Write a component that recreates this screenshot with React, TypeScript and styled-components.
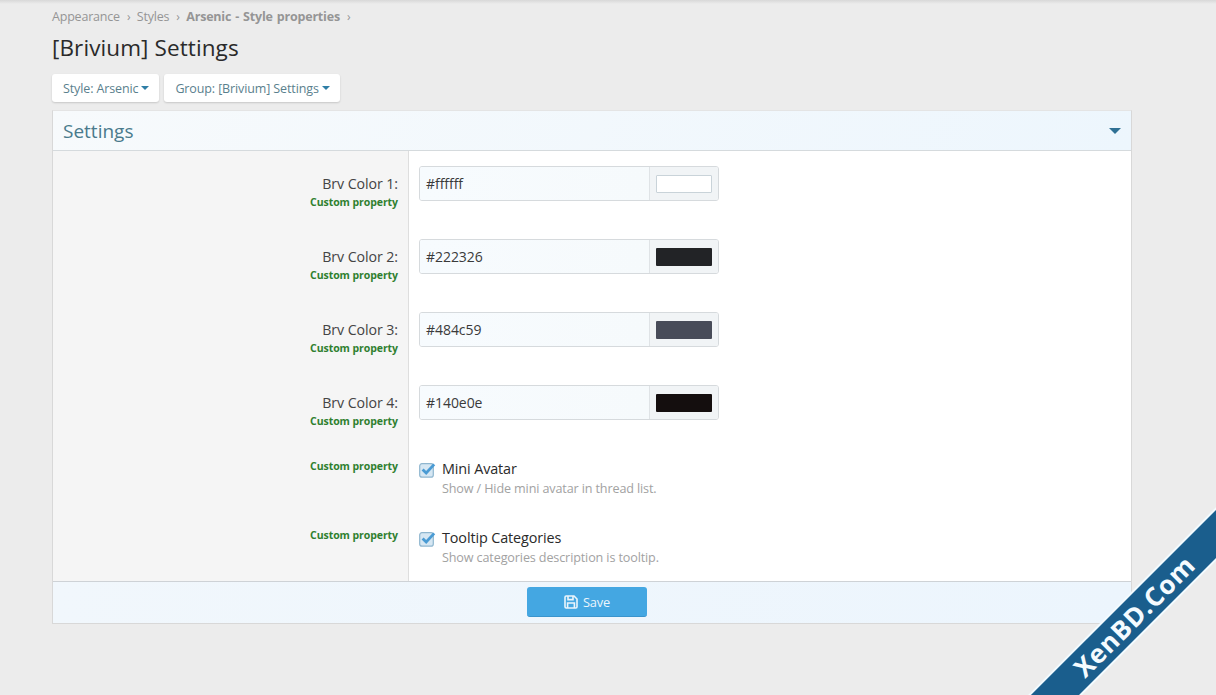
import React from "react";
import styled, { createGlobalStyle } from "styled-components";

const Global = createGlobalStyle`
  html, body { margin: 0; padding: 0; height: 695px; overflow: hidden; background: #ececec; }
  body { font-family: "Open Sans", "Noto Sans", "Liberation Sans", sans-serif; color: #222; }
  * { box-sizing: border-box; }
`;
const Page = styled.div`
  position: relative; width: 1216px; height: 695px; overflow: hidden;
  padding: 8px 84px 0 52px;
  background: linear-gradient(#d8d8d8 0, #ececec 4px);
`;
const Crumbs = styled.div`
  display: flex; align-items: center; height: 17px; font-size: 12.5px; letter-spacing: -0.2px; color: #959595;
`;
const Crumb = styled.span<{ $bold?: boolean }>`
  font-weight: ${(p) => (p.$bold ? 700 : 400)};
  word-spacing: ${(p) => (p.$bold ? "1px" : "0")};
`;
const Sep = styled.span`
  margin: 0 6.5px 0 7px; font-size: 12px; color: #959595;
`;
const Title = styled.h1`
  margin: 7px 0 0; height: 33px; font-size: 22.5px; line-height: 31px; font-weight: 400; letter-spacing: 0.1px; color: #2a2a2a;
`;
const Toolbar = styled.div`
  display: flex; gap: 5px; margin-top: 9px;
`;
const MenuButton = styled.div`
  display: flex; align-items: center; height: 28px; padding: 0 10px 0 11px; background: #fff;
  border-radius: 3px; box-shadow: 0 1px 2px rgba(0,0,0,.16); font-size: 12.5px; letter-spacing: -0.12px; color: #5a7f8d;
`;
const Caret = styled.i`
  display: inline-block; margin-left: 3px; border-style: solid; border-width: 4px 4px 0 4px;
  border-color: #2f7ea6 transparent transparent transparent;
`;
const Block = styled.section`
  margin-top: 8px; width: 1080px; background: #fff; border: 1px solid #d8d8d8; border-top-color: #e4e4e4;
`;
const BlockHeader = styled.header`
  display: flex; align-items: center; justify-content: space-between; height: 40px; padding: 0 10px;
  background: linear-gradient(120deg, #f7fafc, #edf6fd); border-bottom: 1px solid #d5dadd;
  font-size: 19px; letter-spacing: 0; color: #4a7a8c;
`;
const HeaderCaret = styled.i`
  display: block; border-style: solid; border-width: 6px 6px 0 6px;
  border-color: #2f7094 transparent transparent transparent;
`;
const Row = styled.div<{ $h: number }>`
  display: flex; height: ${(p) => p.$h}px;
`;
const LabelCol = styled.div`
  flex: 0 0 356px; background: #f5f5f5; border-right: 1px solid #dedede; text-align: right; padding: 0 10px 0 0;
`;
const Label = styled.div`
  margin-top: 23px; height: 20px; font-size: 14.2px; line-height: 20px; letter-spacing: -0.07px; color: #444;
`;
const Hint = styled.div<{ $top?: number }>`
  margin-top: ${(p) => p.$top ?? 0}px; font-size: 10.5px; line-height: 16px; font-weight: 700; letter-spacing: -0.07px; color: #2f802f;
`;
const ValueCol = styled.div`
  flex: 1; padding: 15px 0 0 10px;
`;
const ColorField = styled.div`
  display: flex; width: 300px; height: 35px; border: 1px solid #d6dadd; border-radius: 3px; overflow: hidden;
`;
const TextField = styled.div`
  flex: 1; padding-left: 6px; background: linear-gradient(90deg, #f7fbfe, #f6fafc); font-size: 14px; line-height: 33px; letter-spacing: -0.05px; color: #3a3a3a;
`;
const SwatchBox = styled.div`
  display: flex; align-items: center; justify-content: center; width: 69px; background: #f1f4f6; border-left: 1px solid #dfe3e6;
`;
const Swatch = styled.div<{ $c: string }>`
  width: 56px; height: 18px; background: ${(p) => p.$c}; border: 1px solid ${(p) => (p.$c === "#ffffff" ? "#c9d3d9" : "transparent")}; border-radius: 1px;
`;
const CheckCol = styled.div`
  flex: 1; display: flex; padding: 17px 0 0 10px; gap: 6px;
`;
const CheckIcon = styled.svg`
  flex: none; width: 17px; height: 16px; margin-top: 2px;
`;
const CheckTitle = styled.div`
  font-size: 14.4px; line-height: 18px; letter-spacing: -0.12px; color: #2a2a2a;
`;
const CheckDesc = styled.div`
  margin-top: 3px; font-size: 12.6px; line-height: 16px; letter-spacing: -0.13px; color: #a2a2a2;
`;
const Footer = styled.footer`
  display: flex; justify-content: center; height: 42px; padding: 5px 10px 0 0;
  background: linear-gradient(90deg, #f1f7fc, #ecf5fd); border-top: 1px solid #ced2d6;
`;
const SaveButton = styled.button`
  display: flex; align-items: center; justify-content: center; gap: 5px; width: 120px; height: 30px; padding: 1px 0 0 0;
  background: #44a7e2; color: #eaf5fc; border: 0; border-bottom: 1px solid #3a94cc; border-radius: 3px;
  font: 400 12.8px "Open Sans", sans-serif; letter-spacing: -0.15px;
`;
const Ribbon = styled.div`
  position: absolute; left: 1134px; top: 616px; width: 420px; height: 34px; margin: -17px 0 0 -210px;
  transform: rotate(-45deg); background: #1a5e8d; box-shadow: 0 0 0 2px #f3fbff;
  display: flex; align-items: center; justify-content: center;
  font-size: 26px; font-weight: 700; letter-spacing: 0.7px; color: #f4fbff;
`;

const Check = () => (
  <CheckIcon viewBox="0 0 17 16">
    <rect x="0.7" y="1.7" width="13.6" height="13.4" rx="2.2" fill="#d6e7f3" stroke="#8fb6cf" strokeWidth="1.2" />
    <path d="M3.6 7.4 L7.2 11 L15.2 2.4" fill="none" stroke="#4a9bd4" strokeWidth="2.8" />
  </CheckIcon>
);

const Save = () => (
  <svg width="14" height="14" viewBox="0 0 14 14" fill="none" stroke="#eaf5fc" strokeWidth="1.6">
    <path d="M1 2.2C1 1.5 1.5 1 2.2 1H10L13 4V11.8C13 12.5 12.5 13 11.8 13H2.2C1.5 13 1 12.5 1 11.8Z" />
    <path d="M4 1V4.6H9V1M3.6 13V8H10.4V13" />
  </svg>
);

const colors = [
  ["Brv Color 1:", "#ffffff"],
  ["Brv Color 2:", "#222326"],
  ["Brv Color 3:", "#484c59"],
  ["Brv Color 4:", "#140e0e"],
];
const checks = [
  ["Mini Avatar", "Show / Hide mini avatar in thread list."],
  ["Tooltip Categories", "Show categories description is tooltip."],
];

export default function App() {
  return (
    <>
      <Global />
      <Page>
        <Crumbs>
          <Crumb>Appearance</Crumb><Sep>›</Sep>
          <Crumb>Styles</Crumb><Sep>›</Sep>
          <Crumb $bold>Arsenic - Style properties</Crumb><Sep>›</Sep>
        </Crumbs>
        <Title>[Brivium] Settings</Title>
        <Toolbar>
          <MenuButton>Style: Arsenic<Caret /></MenuButton>
          <MenuButton>Group: [Brivium] Settings<Caret /></MenuButton>
        </Toolbar>
        <Block>
          <BlockHeader>Settings<HeaderCaret /></BlockHeader>
          {colors.map(([label, value]) => (
            <Row $h={73} key={label}>
              <LabelCol>
                <Label>{label}</Label>
                <Hint>Custom property</Hint>
              </LabelCol>
              <ValueCol>
                <ColorField>
                  <TextField>{value}</TextField>
                  <SwatchBox><Swatch $c={value} /></SwatchBox>
                </ColorField>
              </ValueCol>
            </Row>
          ))}
          {checks.map(([title, desc]) => (
            <Row $h={69} key={title}>
              <LabelCol><Hint $top={15}>Custom property</Hint></LabelCol>
              <CheckCol>
                <Check />
                <div>
                  <CheckTitle>{title}</CheckTitle>
                  <CheckDesc>{desc}</CheckDesc>
                </div>
              </CheckCol>
            </Row>
          ))}
          <Footer>
            <SaveButton><Save />Save</SaveButton>
          </Footer>
        </Block>
        <Ribbon>XenBD.Com</Ribbon>
      </Page>
    </>
  );
}
